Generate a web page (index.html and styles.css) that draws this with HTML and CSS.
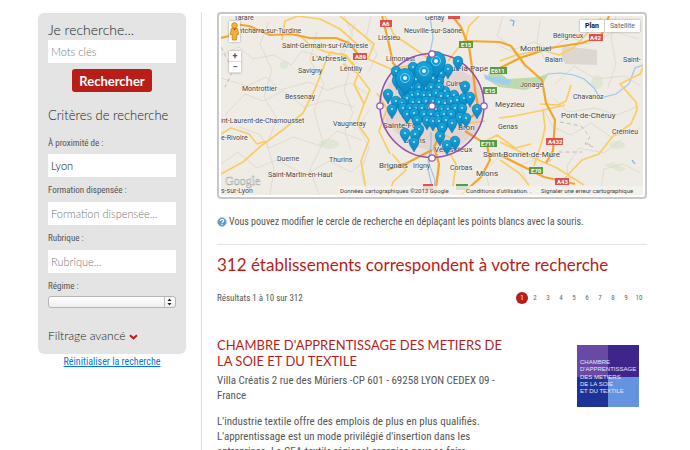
FILE: index.html
```html
<!DOCTYPE html>
<html lang="fr">
<head>
<meta charset="utf-8">
<title>Recherche d'établissements</title>
<link rel="stylesheet" href="styles.css">
</head>
<body>
<div class="page">
  <aside class="sidebar">
    <form class="search">
      <label class="heading" for="keywords">Je recherche...</label>
      <input class="field" id="keywords" type="text" placeholder="Mots clés">
      <button class="submit" type="submit">Rechercher</button>
      <h2 class="heading criteria">Critères de recherche</h2>
      <label class="label first" for="near">À proximité de :</label>
      <input class="field" id="near" type="text" value="Lyon">
      <label class="label" for="training">Formation dispensée :</label>
      <input class="field" id="training" type="text" placeholder="Formation dispensée...">
      <label class="label" for="topic">Rubrique :</label>
      <input class="field" id="topic" type="text" placeholder="Rubrique...">
      <label class="label compact" for="regime">Régime :</label>
      <div class="select-wrap">
        <select class="select" id="regime"><option></option></select>
        <svg class="select-arrows" viewBox="0 0 11 10" aria-hidden="true"><path d="M.5 0v10" stroke="#bbb"/><path d="M3.500 4 5.500 1.500 7.500 4zM3.500 6h4l-2 2.500z" fill="#222"/></svg>
      </div>
      <button class="advanced" type="button">Filtrage avancé
        <svg class="chevron" viewBox="0 0 9 6" aria-hidden="true"><path d="M1 1.200 4.500 4.300 8 1.200" fill="none" stroke="#b81d18" stroke-width="2"/></svg>
      </button>
    </form>
    <a class="reset" href="#">Réinitialiser la recherche</a>
  </aside>

  <main class="content">
    <div class="map-frame">
      <svg class="map" viewBox="221 16 422 179" role="img" aria-label="Carte de Lyon">
        <defs>
          <linearGradient id="blue" x1="0" y1="0" x2="0" y2="1"><stop offset="0" stop-color="#16a6dc"/><stop offset="1" stop-color="#0a84c0"/></linearGradient>
          <g id="pin"><path d="M0 10C-1 7-4.800 4-4.800 0a4.800 4.800 0 0 1 9.600 0C4.800 4 1 7 0 10z" fill="url(#blue)" stroke="#0871a8" stroke-width=".6"/><circle r="1.100" fill="#a5dcf2"/></g>
          <g id="bigpin"><path d="M0 18C-1 13-9.500 8-9.500 0a9.500 9.500 0 0 1 19 0C9.500 8 1 13 0 18z" fill="url(#blue)" stroke="#0871a8" stroke-width=".7"/><circle r="4.500" fill="none" stroke="#79cdec"/><circle r="2" fill="#e6f8ff"/></g>
        </defs>
        <rect x="221" y="16" width="422" height="179" fill="#efece6"/>
        <g fill="#dfe6d4"><circle cx="284" cy="65" r="4"/><ellipse cx="329" cy="144" rx="10" ry="5"/><ellipse cx="617" cy="145" rx="8" ry="4"/><ellipse cx="597" cy="82" rx="6" ry="7"/><path d="m604 165 9-3 13 7-5 3z"/></g>
        <path d="M388 85 408 65 444 61 476 79 484 105 477 132 447 155 410 145 386 123z" fill="#e8ddd5"/>
        <path d="m563 46 34 4v15l-32-1-4-10z" fill="#ddd7d0"/>
        <path d="m492 67 16 12 31-2 10-4-5 9-18 8-27-3-13-8z" fill="#bddaae"/>
        <g fill="none" stroke="#dcd7cc" stroke-width=".8">
          <path d="M221 55l18-8 14 12 21-4 17 10 11-14 20 6 22-4 11-30M221 78l26 8 19-9 14 13 29-8 18 8 24-7 18 12M225 115l20-21 18 7 20-10 21 16 24-7 27 7M239 127l20 7 10 14 24-11 28 9 16-15 25 9M221 164l17-12 19 16 20-8 28 15 24-14 22 11 14-12M270 195l4-26-7-25 10-25-13-22 8-27-12-26 9-22M319 195l-9-26 13-26-9-33 10-26-14-24 7-28"/>
          <path d="M371 16l-5 22 11 16-8 17M344 16l9 19-12 16 8 22-5 17 9 23-8 18 6 20M503 16l-6 20 18 13 19-7 17 8 17-14 20 8 27-12 24 7M500 46l20 9 6 15M540 20l-3 23 9 19M616 16l-5 21 5 27-8 23M553 98l15 14 27-4 22 7 22-9M543 108l10 19 18 8 20-12 20 14 30-9M570 195l-3-29 12-18 25 5 17-13M530 190l-10-25 22-8M600 195l4-26 19-5 18 9M554 85l20-19 22 13 28-3 17 10M370 109l-12 18 11 20-8 25 6 22M500 156l-15 14 6 24"/>
        </g>
        <g fill="none" stroke="#b5b0a8" stroke-width=".8" stroke-dasharray="4 3"><path d="m221 47 12 24-8 16M560 122l21 4 9 11-5 7 8 3-8-5M549 162l9-10 24 0"/></g>
        <g fill="none" stroke="#9cc5ec" stroke-width="1.200">
          <path d="M430 16l3 22-5 25 4 38M431 132v14l-3 15 7 19-2 15M432 149l-4 20 5 22"/>
          <path d="m548 74 12-1 14 2 10 4 10 9 6 10 16-4 13-10 6-16 8-3"/>
          <path d="M510 20l4 1-1 5M632 160l3 4" stroke="#70a9eb"/>
        </g>
        <path d="m484 74 6 3 13 1 9 3-4 4-12-2-11-4z" fill="#a1cdef"/>
        <g fill="none" stroke="#f9cd62" stroke-width="1.700" stroke-linejoin="round">
          <path d="M282 40l3-19 13-5M297 16l23 3 20 10 18 16M296 32l14 13 16 7 20 3 6 8M326 61l-11 28-12 24-19 16-23 17-18 16-22 12M221 134l10-6 18 6 8 10 9-3M325 60l6-8 14 4 9 10"/>
          <path d="M385 16l9 19 24 16 14 10M364 104l6-14-13-17-14-9M340 16l34 28-6 15 23 10 22-4M352 62l7 10-5 12 10 20-7 19 12 17-8 21 5 28M479 16l-10 10-3 12-18 23M500 61l16-6 26-5 17 5 14-7 10-10 18-20M540 104l18 1 8-4 5-16M543 110l2 18-3 13-8 25M500 142l27 13 30 13 27 17M499 118l15-2 25-5 26-6M500 160l19 13 10 12M565 178l17-18 17-6 14-18 18-12 6-14-1-8-16-18 20-10 8-16M392 154l14 16-13 12-4 13M390 154l-11-23 8-22-10-16M445 145l11 19-3 22M484 142l13-7 18 13 16-4M411 84l15 19 25 7 34-5M398 78l34 51 23 11M451 95l12 29 22-3M397 129l34-19 24-11"/>
        </g>
        <g fill="none" stroke="#f5a42c" stroke-width="2.200" stroke-linejoin="round">
          <path d="M221 38l8-2 5-12 15 2 12 5 9 4 21-1 19 4 26 0 13 5 9 11M382 16l6 24 5 23 14 17M452 16l9 11 8 20 5 33 1 10 4 22-13 8M467 41l33 1M500 68l20-10 30-10 32-5 19-7 8-20M500 42l11 4 14 19 17 15 4 23 9 17-2 31-7 12M465 131l22 14 3 15-9 17-20 18M500 155l24 12 20 10 31 7M432 109l9 24-7 14 5 17-4 31M387 170l20-7 25-13"/>
        </g>
        <g class="road-sign"><path fill="#d9534f" d="M380 20h12v7h-12zM353 53h14v7h-14zM448 16h12v3h-12zM589 34h14v7h-14zM546 138h17v7h-17zM555 178h14v7h-14zM423 184h10v6h-10z"/><path fill="#579b45" d="M459 41h14v7h-14zM483 87h14v7h-14zM490 67h17v7h-17zM480 140h17v7h-17zM529 167h14v7h-14zM456 184h12v6h-12z"/><text x="382" y="26">A6</text><text x="355" y="59">A89</text><text x="590" y="40">A42</text><text x="548" y="144">A432</text><text x="557" y="184">A43</text><text x="461" y="47">E15</text><text x="485" y="93">E15</text><text x="491" y="73">E611</text><text x="481" y="146">E711</text><text x="531" y="173">E70</text></g>
        <g class="places">
          <text x="234" y="20">Tarare</text><text x="230" y="33">Pontcharra-sur-Turdine</text><text x="282" y="48">Saint-Germain-sur-l'Arbresle</text><text class="town" x="312" y="61">L'Arbresle</text><text x="298" y="73">Savigny</text><text x="340" y="71">Lentilly</text><text x="242" y="91">Montrottier</text><text x="285" y="99">Bessenay</text><text x="220" y="123">int-Laurent-de-Chamousset</text><text x="221" y="140">e-Rivoire</text><text x="333" y="126">Vaugneray</text><text x="277" y="161">Duerne</text><text x="329" y="162">Thurins</text><text x="268" y="177">Saint-Martin-en-Haut</text><text x="221" y="193">s-sur-Lyon</text>
          <text x="425" y="20">Genay</text><text x="404" y="33">Neuville-sur-Saône</text><text x="378" y="40">Lissieu</text><text x="386" y="61">Limonest</text><text class="town" x="434" y="71">Rillieux-la-Pape</text><text x="446" y="86">Cuire</text><text class="town" x="383" y="128">Sainte-Foy</text><text x="404" y="143">Oullins</text><text class="town" x="458" y="130">Bron</text><text class="town" x="434" y="152">Vénissieux</text><text class="town" x="379" y="168">Brignais</text><text x="413" y="168">Irigny</text><text x="450" y="170">Corbas</text><text class="town" x="476" y="176">Mions</text>
          <text x="553" y="38">Béligneux</text><text class="town" x="520" y="51">Montluel</text><text x="545" y="62">Balan</text><text x="623" y="62">Saint-</text><text x="520" y="87">Jonage</text><text x="573" y="99">Chavanoz</text><text class="town" x="495" y="107">Meyzieu</text><text class="town" x="561" y="118">Pont-de-Chéruy</text><text x="612" y="134">Crémieu</text><text x="498" y="129">Genas</text><text class="town" x="483" y="157">Saint-Bonnet-de-Mure</text>
        </g>
        <circle cx="432" cy="105.500" r="52" fill="#8f3f98" fill-opacity=".06" stroke="#994fa3" stroke-width="1.600"/>
        <g>
          <use href="#pin" x="413" y="67"/><use href="#pin" x="396" y="71"/><use href="#pin" x="458" y="61"/><use href="#pin" x="441" y="73"/><use href="#pin" x="448" y="69"/><use href="#pin" x="397" y="80"/><use href="#pin" x="416" y="79"/><use href="#pin" x="430" y="82"/><use href="#pin" x="439" y="81"/><use href="#pin" x="433" y="78"/><use href="#pin" x="403" y="90"/><use href="#pin" x="388" y="94"/><use href="#pin" x="411" y="87"/><use href="#pin" x="419" y="87"/><use href="#pin" x="426" y="88"/><use href="#pin" x="431" y="87"/><use href="#pin" x="445" y="91"/><use href="#pin" x="439" y="87"/><use href="#pin" x="465" y="86"/><use href="#pin" x="412" y="95"/><use href="#pin" x="407" y="98"/><use href="#pin" x="418" y="94"/><use href="#pin" x="424" y="95"/><use href="#pin" x="430" y="95"/><use href="#pin" x="436" y="93"/><use href="#pin" x="441" y="96"/><use href="#pin" x="448" y="96"/><use href="#pin" x="454" y="95"/><use href="#pin" x="396" y="101"/><use href="#pin" x="402" y="103"/><use href="#pin" x="413" y="102"/><use href="#pin" x="419" y="102"/><use href="#pin" x="426" y="101"/><use href="#pin" x="433" y="101"/><use href="#pin" x="439" y="102"/><use href="#pin" x="445" y="103"/><use href="#pin" x="451" y="101"/><use href="#pin" x="457" y="100"/><use href="#pin" x="464" y="98"/><use href="#pin" x="470" y="97"/><use href="#pin" x="392" y="109"/><use href="#pin" x="403" y="108"/><use href="#pin" x="410" y="108"/><use href="#pin" x="416" y="108"/><use href="#pin" x="422" y="108"/><use href="#pin" x="429" y="108"/><use href="#pin" x="436" y="109"/><use href="#pin" x="442" y="109"/><use href="#pin" x="448" y="109"/><use href="#pin" x="455" y="108"/><use href="#pin" x="462" y="108"/><use href="#pin" x="477" y="109"/><use href="#pin" x="407" y="114"/><use href="#pin" x="414" y="113"/><use href="#pin" x="424" y="114"/><use href="#pin" x="431" y="114"/><use href="#pin" x="438" y="116"/><use href="#pin" x="444" y="114"/><use href="#pin" x="451" y="114"/><use href="#pin" x="460" y="117"/><use href="#pin" x="466" y="118"/><use href="#pin" x="417" y="120"/><use href="#pin" x="427" y="120"/><use href="#pin" x="433" y="121"/><use href="#pin" x="439" y="121"/><use href="#pin" x="446" y="120"/><use href="#pin" x="452" y="123"/><use href="#pin" x="442" y="127"/><use href="#pin" x="419" y="129"/><use href="#pin" x="415" y="134"/><use href="#pin" x="405" y="133"/><use href="#pin" x="440" y="136"/><use href="#pin" x="414" y="142"/><use href="#pin" x="455" y="141"/><use href="#pin" x="447" y="145"/>
          <use href="#bigpin" x="405" y="78"/><use href="#bigpin" x="436" y="61"/><use href="#bigpin" x="424" y="71"/>
        </g>
        <g fill="#fff" stroke="#994fa3" stroke-width="1.200"><circle cx="432" cy="54" r="3.200"/><circle cx="380" cy="106" r="3.200"/><circle cx="484" cy="106" r="3.200"/><circle cx="432" cy="158" r="3.200"/><circle cx="432" cy="106" r="3.200"/></g>
        <text class="google" x="225" y="185">Google</text>
        <path d="M338 186h305v9H338z" fill="#f5f3ee" fill-opacity=".8"/>
        <g class="credits"><text x="340" y="193">Données cartographiques ©2013 Google</text><text x="466" y="193">Conditions d'utilisation. .</text><text x="541" y="193">Signaler une erreur cartographique</text></g>
      </svg>
      <div class="map-left">
        <svg class="pegman" viewBox="0 0 11 21" aria-hidden="true"><circle cx="5.500" cy="4.500" r="2.800" fill="#f5b234" stroke="#bd7a1b" stroke-width=".7"/><path d="M2.500 7.500h6l1.200 6H8L7.500 19h-4L3 13.500H1.300z" fill="#f5b234" stroke="#bd7a1b" stroke-width=".7"/><path d="m3.500 7.500 2 2 2-2" fill="#cf4529"/></svg>
        <div class="zoom"><button type="button" aria-label="Zoom avant">+</button><button type="button" aria-label="Zoom arrière">−</button></div>
      </div>
      <div class="map-type"><button class="active" type="button">Plan</button><button type="button">Satellite</button></div>
    </div>

    <p class="hint"><svg class="help" viewBox="0 0 10 10" aria-hidden="true"><circle cx="5" cy="5" r="4.500" fill="#5c94cc" stroke="#b2cbe3"/><path d="M3.400 4C3.400 1.800 6.800 1.900 6.600 4 6.500 5 5 5 5 6.200M5 7v1" fill="none" stroke="#fff" stroke-width="1.200"/></svg>Vous pouvez modifier le cercle de recherche en déplaçant les points blancs avec la souris.</p>
    <h1 class="title">312 établissements correspondent à votre recherche</h1>
    <div class="results-bar">
      <span>Résultats 1 à 10 sur 312</span>
      <nav class="pages" aria-label="Pages"><a class="current" href="#">1</a><a href="#">2</a><a href="#">3</a><a href="#">4</a><a href="#">5</a><a href="#">6</a><a href="#">7</a><a href="#">8</a><a href="#">9</a><a href="#">10</a></nav>
    </div>
    <article class="result">
      <div class="result-text">
        <h2 class="result-title">CHAMBRE D'APPRENTISSAGE DES METIERS DE LA SOIE ET DU TEXTILE</h2>
        <p class="address">Villa Créatis 2 rue des Mûriers -CP 601 - 69258 LYON CEDEX 09 - France</p>
        <p class="description">L'industrie textile offre des emplois de plus en plus qualifiés. L'apprentissage est un mode privilégié d'insertion dans les entreprises. La CEA textile régional organise pour se faire</p>
      </div>
      <svg class="logo" viewBox="0 0 62 62" role="img" aria-label="Chambre d'apprentissage des métiers de la soie et du textile">
        <path fill="#6849a4" d="M0 0h31v32H0z"/><path fill="#3e258c" d="M31 0h31v32H31z"/><path fill="#1d3296" d="M0 32h31v30H0z"/><path fill="#6493df" d="M31 32h31v30H31z"/>
        <g class="logo-text"><text x="3" y="19">CHAMBRE</text><text x="3" y="26">D'APPRENTISSAGE</text><text x="3" y="34">DES METIERS</text><text x="3" y="41">DE LA SOIE</text><text x="3" y="48">ET DU TEXTILE</text></g>
      </svg>
    </article>
  </main>
</div>
</body>
</html>
```
FILE: styles.css
```css
* { box-sizing: border-box; }
body {
  margin: 0;
  background: #fff;
  color: #555;
  font-family: "Roboto Condensed", "Liberation Sans Narrow", Roboto, sans-serif;
  font-size: 12px;
}
h1, h2, p { margin: 0; }
button, input, select { font: inherit; margin: 0; }

.page { display: flex; gap: 15px; padding: 12px 43px 0 38px; height: 100vh; overflow: hidden; }
.sidebar { flex: 0 0 148px; padding-top: 1px; text-align: center; }
.search {
  display: flex;
  flex-direction: column;
  padding: 8px 10px 9px;
  border-radius: 6px;
  background: #e4e4e4;
  text-align: left;
}
.heading { font: 300 14px/18px Lato, sans-serif; color: #222; }
.field {
  width: 100%;
  height: 23px;
  padding: 0 3px;
  border: 0;
  background: #fff;
  color: #000;
  font: 300 11px Lato, sans-serif;
}
.search > .heading + .field { margin-top: 1px; }
.field::placeholder { color: #777; opacity: 1; }
.submit {
  align-self: center;
  height: 23px;
  margin: 6px 0 14px;
  padding: 0 7px;
  border: 0;
  border-radius: 3px;
  background: #b81d18;
  color: #fff;
  font: bold 13px Lato, sans-serif;
}
.criteria { margin-bottom: 10px; font-size: 13px; white-space: nowrap; }
.label { height: 25px; padding-top: 7px; font-size: 9px; line-height: 12px; }
.label.first { height: 20px; padding-top: 3px; }
.label.compact { height: 23px; }
.select-wrap { position: relative; height: 12px; margin-bottom: 19px; }
.select {
  display: block;
  width: 100%;
  height: 12px;
  padding: 0;
  border: 1px solid #b5b5b5;
  border-radius: 3px;
  background: linear-gradient(#fff, #eee);
  appearance: none;
}
.select-arrows { position: absolute; right: 1px; top: 1px; width: 11px; height: 10px; }
.advanced {
  padding: 0;
  border: 0;
  background: none;
  color: #222;
  font: 300 12px/18px Lato, sans-serif;
  text-align: left;
}
.chevron { width: 9px; height: 6px; }
.reset { color: #0875d1; font-size: 10px; line-height: 16px; }

.content { flex: 1; min-width: 0; padding-left: 15px; border-left: 1px solid #ddd; }
.map-frame {
  position: relative;
  padding: 2px;
  border: 2px solid #c8c8c8;
  border-radius: 4px;
}
.map { display: block; width: 100%; }
.places { font: 7px Roboto, sans-serif; fill: #444; stroke: #fff; stroke-width: 1px; stroke-opacity: .6; paint-order: stroke; }
.town { font-size: 8px; }
.road-sign { font: bold 6px Roboto, sans-serif; fill: #fff; }
.google { font: 12px "Liberation Serif", serif; fill: #fff; stroke: #aaa; stroke-width: .5px; }
.credits { font: 6px Roboto, sans-serif; fill: #444; }
.map-left { position: absolute; left: 10px; top: 7px; width: 12px; }
.pegman { display: block; width: 11px; height: 21px; background: #ffffffcc; box-shadow: 0 0 2px #999; }
.zoom { margin-top: 9px; box-shadow: 0 0 2px #999; }
.zoom button { display: block; width: 100%; height: 11px; padding: 0; border: 0; border-bottom: 1px solid #ddd; background: #fff; color: #555; font: bold 9px/10px Roboto, sans-serif; }
.map-type { position: absolute; right: 5px; top: 6px; display: flex; box-shadow: 0 0 2px #999; }
.map-type button { height: 12px; padding: 0 5px; border: 0; background: #fff; color: #666; font: 7px Roboto, sans-serif; }
.map-type button + button { border-left: 1px solid #ccc; }
.map-type .active { color: #111; font-weight: bold; }

.hint { display: flex; align-items: center; gap: 2px; padding: 15px 0 14px; border-bottom: 1px solid #e2e2e2; font-size: 10px; line-height: 16px; }
.help { flex: none; width: 10px; height: 10px; }
.title { margin-top: 8px; color: #b81d18; font: 17px/24px Lato, sans-serif; }
.results-bar { display: flex; align-items: center; justify-content: space-between; margin-top: 15px; padding-right: 2px; font-size: 9px; }
.pages { display: flex; align-items: center; gap: 1px; font-size: 7px; }
.pages a { min-width: 12px; line-height: 12px; color: #666; text-align: center; text-decoration: none; }
.pages .current { border-radius: 6px; background: #b81d18; color: #fff; }

.result { display: flex; align-items: flex-start; justify-content: space-between; gap: 40px; margin-top: 33px; padding-right: 8px; }
.result-text { flex: 0 1 290px; }
.result-title { color: #b81d18; font: 13px/16px Lato, sans-serif; }
.address, .description { font-size: 11px; line-height: 15px; }
.address { margin-top: 4px; }
.description { max-width: 280px; margin-top: 11px; }
.logo { flex: none; width: 62px; height: 62px; margin-top: 8px; }
.logo-text { font: 6px "Liberation Sans", sans-serif; fill: #e8e6f8; }
```
